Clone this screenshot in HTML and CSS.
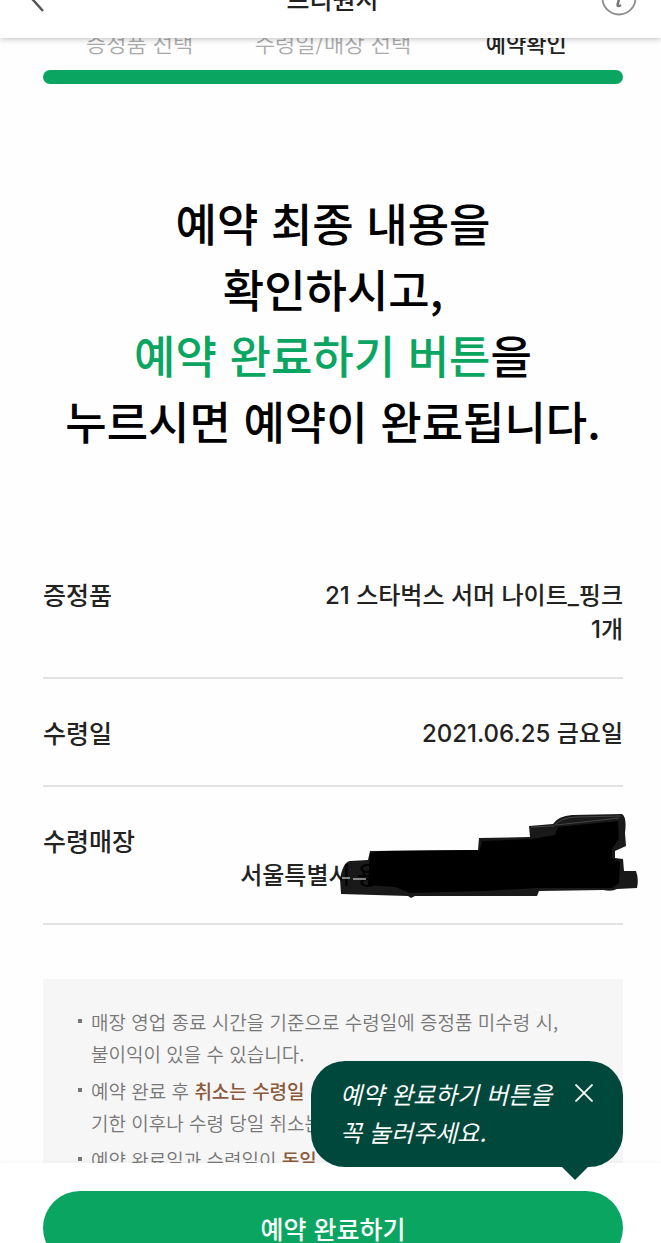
FILE: index.html
```html
<!DOCTYPE html>
<html lang="ko">
<head>
    <meta charset="UTF-8">
    <meta name="viewport" content="width=device-width, initial-scale=1.0">
    <title>프리퀀시</title>
    <link rel="stylesheet" href="styles.css">
</head>
<body>
    <header class="topbar">
        <button class="icon-button back" aria-label="뒤로">
            <svg width="28" height="42" viewBox="0 0 28 42" fill="none" stroke="#555" stroke-width="2.5">
                <path d="M20 1 L2 21 L20 41"/>
            </svg>
        </button>
        <h1 class="topbar-title">프리퀀시</h1>
        <button class="icon-button info" aria-label="안내">
            <svg width="36" height="36" viewBox="0 0 36 36" fill="none">
                <circle cx="18" cy="18" r="16.5" stroke="#8c8c8c" stroke-width="1.8"/>
                <circle cx="19.5" cy="9.5" r="1.8" fill="#777"/>
                <path d="M15 15 H19 L16.5 25 Q16.5 27 20 25" stroke="#777" stroke-width="2.5"/>
            </svg>
        </button>
    </header>

    <main class="content">
        <ol class="steps">
            <li>증정품 선택</li>
            <li>수령일/매장 선택</li>
            <li class="current" aria-current="step">예약확인</li>
        </ol>
        <div class="progress"></div>

        <h2 class="headline">
            예약 최종 내용을<br>
            확인하시고,<br>
            <span class="highlight">예약 완료하기 버튼</span>을<br>
            누르시면 예약이 완료됩니다.
        </h2>

        <dl class="details">
            <div class="detail-row">
                <dt>증정품</dt>
                <dd>21 스타벅스 서머 나이트_핑크<br>1개</dd>
            </div>
            <div class="detail-row">
                <dt>수령일</dt>
                <dd>2021.06.25 금요일</dd>
            </div>
            <div class="detail-row">
                <dt>수령매장</dt>
                <dd class="store">
                    <br>서울특별시 용
                    <!-- hides the rest of the address -->
                    <svg class="scribble" width="304" height="86" viewBox="338 812 304 86" aria-hidden="true">
                        <path fill="#000" fill-opacity="0.9" d="M341 893 L340 878 Q343 861 350 860 L368 859 L370 850 L478 849 L479 837 L530 836 L529 825 L553 823 Q558 815 572 814 L622 813 Q627 816 625 832 L626 845 L615 850 L615 857 L623 858 L624 870 L636 870 Q639 878 637 887 L617 888 Q612 891 603 889 L539 890 L537 895 L415 895 L411 897 L408 895 Z"/>
                        <path fill="#000" d="M370 852 L382 850 L480 849 L482 840 L532 838 L555 834 L558 826 L618 820 L619 838 L612 848 L612 857 L620 861 L619 882 L612 887 L537 887 L484 890 L410 892 L395 886 L368 884 Z"/>
                        <path stroke="#444" stroke-width="1" fill="none" d="M531 826 L554 825 Q560 817 576 816 L621 815 M556 824 L619 817"/>
                        <path stroke="#aaa" stroke-width="1.5" fill="none" d="M342 877 H350 M353 878 H366"/>
                    </svg>
                </dd>
            </div>
        </dl>

        <ul class="notice">
            <li>매장 영업 종료 시간을 기준으로 수령일에 증정품 미수령 시,<br>불이익이 있을 수 있습니다.</li>
            <li>예약 완료 후 <strong>취소는 수령일</strong><br>기한 이후나 수령 당일 취소는</li>
            <li>예약 완료일과 수령일이 <strong>동일</strong></li>
        </ul>
    </main>

    <footer class="bottom">
        <div class="tooltip" role="status">
            <p>예약 완료하기 버튼을<br>꼭 눌러주세요.</p>
            <button class="tooltip-close" aria-label="닫기">
                <svg width="18" height="18" viewBox="0 0 18 18" stroke="#fff" stroke-width="1.8">
                    <path d="M0.5 0.5 L17.5 17.5 M17.5 0.5 L0.5 17.5"/>
                </svg>
            </button>
        </div>
        <button class="submit-button">예약 완료하기</button>
    </footer>
</body>
</html>
```
FILE: styles.css
```css
:root {
    --green: #0aa661;
    --dark-green: #00483b;
    --text-color: #222;
    --line: #e3e3e3;
    --left: 43px;
    --right: 38px;
}

* {
    box-sizing: border-box;
}

body {
    display: flex;
    flex-direction: column;
    height: 100vh;
    margin: 0;
    overflow: hidden;
    background: #fefefe;
    color: var(--text-color);
    font-family: "Noto Sans CJK KR", sans-serif;
}

button {
    padding: 0;
    border: none;
    background: none;
    color: inherit;
    font-family: inherit;
    cursor: pointer;
}

h1, h2, p, dl, dd, ol, ul {
    margin: 0;
    padding: 0;
}

svg {
    display: block;
}

/* Top bar, partly scrolled out of view */
.topbar {
    position: relative;
    z-index: 1;
    display: grid;
    grid-template-columns: 1fr auto 1fr;
    align-content: end;
    align-items: end;
    flex: none;
    height: 38px;
    padding: 0 24px 22px 28px;
    background: #fff;
    box-shadow: 0 1px 6px rgba(0, 0, 0, 0.25);
}

.topbar-title {
    padding-bottom: 2px;
    font-size: 25px;
    font-weight: 500;
    line-height: 32px;
}

.back {
    justify-self: start;
    padding-bottom: 4px;
}

.back svg {
    margin-left: -5px;
}

.info {
    justify-self: end;
}

.content {
    flex: 1;
    min-height: 0;
    overflow: hidden;
    padding: 0 var(--right) 0 var(--left);
}

.steps {
    display: grid;
    grid-template-columns: repeat(3, 1fr);
    align-content: end;
    height: 21px;
    list-style: none;
    color: #aaa;
    font-size: 22px;
    font-weight: 350;
    line-height: 34px;
    text-align: center;
    white-space: nowrap;
}

.steps .current {
    color: var(--text-color);
    font-weight: 500;
}

.progress {
    height: 14px;
    margin-top: 11px;
    border-radius: 7px;
    background: var(--green);
}

.headline {
    margin: 106px -20px 0;
    color: #000;
    font-size: 45px;
    font-weight: 500;
    line-height: 66px;
    text-align: center;
}

.highlight {
    color: var(--green);
}

.details {
    margin-top: 87px;
}

.detail-row {
    display: flex;
    justify-content: space-between;
    min-height: 108px;
    padding: 38px 0 30px;
    border-bottom: 2px solid var(--line);
    font-weight: 500;
    line-height: 34px;
}

.detail-row dt {
    font-size: 25px;
    line-height: 30px;
}

.detail-row dd {
    font-family: Inter, "Noto Sans CJK KR", sans-serif;
    font-size: 24px;
    text-align: right;
}

.detail-row .store {
    position: relative;
    width: 66%;
    text-align: left;
}

.scribble {
    position: absolute;
    top: -12px;
    right: -19px;
}

.notice {
    margin-top: 54px;
    padding: 27px 20px 27px 48px;
    background: #f6f6f6;
    color: #777;
    font-size: 19px;
    font-weight: 350;
    line-height: 32px;
    list-style: none;
    white-space: nowrap;
}

.notice li {
    position: relative;
    margin-bottom: 5px;
}

.notice li::before {
    content: "";
    position: absolute;
    top: 13px;
    left: -13px;
    width: 4px;
    height: 4px;
    background: #777;
}

.notice strong {
    color: #8a5a3c;
    font-weight: 500;
}

.bottom {
    position: relative;
    flex: none;
    height: 80px;
    padding: 28px var(--right) 0 var(--left);
    background: #fff;
    box-shadow: 0 -1px 4px rgba(0, 0, 0, 0.04);
}

.submit-button {
    width: 100%;
    height: 74px;
    border-radius: 37px;
    background: var(--green);
    color: #fff;
    font-size: 25px;
    font-weight: 500;
}

.tooltip {
    position: absolute;
    right: var(--right);
    bottom: 76px;
    display: flex;
    justify-content: space-between;
    align-items: flex-start;
    width: 312px;
    padding: 14px 30px 16px 29px;
    border-radius: 34px;
    background: var(--dark-green);
    color: #fff;
    font-size: 24px;
    font-style: italic;
    line-height: 38px;
    white-space: nowrap;
}

.tooltip::after {
    content: "";
    position: absolute;
    top: 100%;
    right: 35px;
    border: 13px solid transparent;
    border-top-color: var(--dark-green);
    border-bottom: none;
}

.tooltip-close {
    margin-top: 9px;
}
```
